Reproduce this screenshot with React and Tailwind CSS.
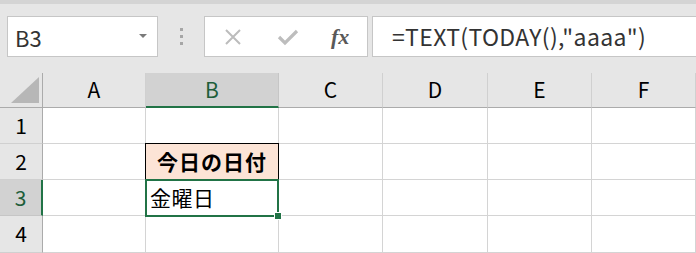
const font = { fontFamily: '"Noto Sans CJK JP", "Noto Sans", sans-serif' };

const COLS = ['A', 'B', 'C', 'D', 'E', 'F'];
const ROWS = [1, 2, 3, 4];

function FormulaBar() {
  return (
    <div className="flex h-[41px] mt-[12px]">
      <div className="ml-[7px] w-[151px] h-full bg-white border border-[#c6c6c6] flex items-center justify-between pl-[7px] pr-[10px]">
        <span className="text-[22px] text-[#333] leading-none">B3</span>
        <span className="w-0 h-0 border-l-[4px] border-r-[4px] border-t-[4px] border-l-transparent border-r-transparent border-t-[#7a7a7a] mb-[2px]" />
      </div>
      <div className="w-[46px] flex flex-col items-center justify-center gap-[4px]">
        <span className="w-[3px] h-[3px] bg-[#a6a6a6]" />
        <span className="w-[3px] h-[3px] bg-[#a6a6a6]" />
        <span className="w-[3px] h-[3px] bg-[#a6a6a6]" />
      </div>
      <div className="w-[164px] h-full bg-white border border-[#c6c6c6] flex items-center">
        <svg width="18" height="18" viewBox="0 0 18 18" className="ml-[19px]">
          <path d="M2 2 L16 16 M16 2 L2 16" stroke="#bcbcbc" strokeWidth="2" fill="none" />
        </svg>
        <svg width="22" height="18" viewBox="0 0 22 18" className="ml-[35px]">
          <path d="M2 9 L8 15 L20 3" stroke="#bdbdbd" strokeWidth="3.2" fill="none" />
        </svg>
        <span
          className="ml-[32px] text-[22px] italic font-semibold text-[#595959] leading-none"
          style={{ fontFamily: '"Liberation Serif", serif' }}
        >
          fx
        </span>
      </div>
      <div className="ml-[4px] flex-1 h-full bg-white border-y border-l border-[#c6c6c6] flex items-center pl-[19px]">
        <span className="text-[23px] text-[#333] leading-none tracking-[0.35px]">=TEXT(TODAY(),"aaaa")</span>
      </div>
    </div>
  );
}

function Grid() {
  return (
    <div className="grid grid-cols-[43px_103px_133px_104px_105px_104px_104px] grid-rows-[35px_36px_36px_36px_37px] mt-[16px] bg-white">
      <div className="bg-[#e6e6e6] border-r border-b border-[#ababab] flex items-end justify-end pr-[3px] pb-[4px]">
        <svg width="28" height="26" viewBox="0 0 28 26">
          <path d="M28 0 L28 26 L0 26 Z" fill="#b7b7b7" />
        </svg>
      </div>
      {COLS.map((c) =>
        c === 'B' ? (
          <div
            key={c}
            className="bg-[#d2d2d2] border-r border-[#c6c6c6] border-b-2 border-b-[#217346] flex items-center justify-center text-[21px] text-[#1e5e3a]"
          >
            {c}
          </div>
        ) : (
          <div
            key={c}
            className="bg-[#e6e6e6] border-r border-[#d0d0d0] border-b border-b-[#ababab] flex items-center justify-center text-[21px] text-black"
          >
            {c}
          </div>
        )
      )}
      {ROWS.map((r) => (
        <Row key={r} r={r} />
      ))}
    </div>
  );
}

function Row({ r }) {
  const selected = r === 3;
  return (
    <>
      {selected ? (
        <div className="bg-[#d2d2d2] border-r-2 border-r-[#217346] border-b border-[#c6c6c6] flex items-center justify-center text-[21px] text-[#1e5e3a]">
          {r}
        </div>
      ) : (
        <div className="bg-[#e6e6e6] border-r border-r-[#ababab] border-b border-[#d0d0d0] flex items-center justify-center text-[21px] text-black">
          {r}
        </div>
      )}
      {COLS.map((c) => {
        if (c === 'B' && r === 2) {
          return (
            <div
              key={c}
              className="bg-[#fce4d6] border border-black -ml-px -mt-px flex items-center justify-center text-[21px] font-bold tracking-[1px] text-black"
            >
              今日の日付
            </div>
          );
        }
        if (c === 'B' && r === 3) {
          return (
            <div
              key={c}
              className="relative border-2 border-[#217346] -ml-px -mt-px -mb-px flex items-center pl-[3px] text-[21px] tracking-[0.5px] text-black"
            >
              金曜日
              <span className="absolute -right-[5px] -bottom-[5px] w-[8px] h-[8px] bg-[#217346] border border-white" />
            </div>
          );
        }
        return <div key={c} className="border-r border-b border-[#d4d4d4]" />;
      })}
    </>
  );
}

export default function App() {
  return (
    <div className="w-[696px] h-[253px] overflow-hidden bg-[#e6e6e6]" style={font}>
      <div className="h-[4px] bg-[#d4d4d4]" />
      <FormulaBar />
      <Grid />
    </div>
  );
}
